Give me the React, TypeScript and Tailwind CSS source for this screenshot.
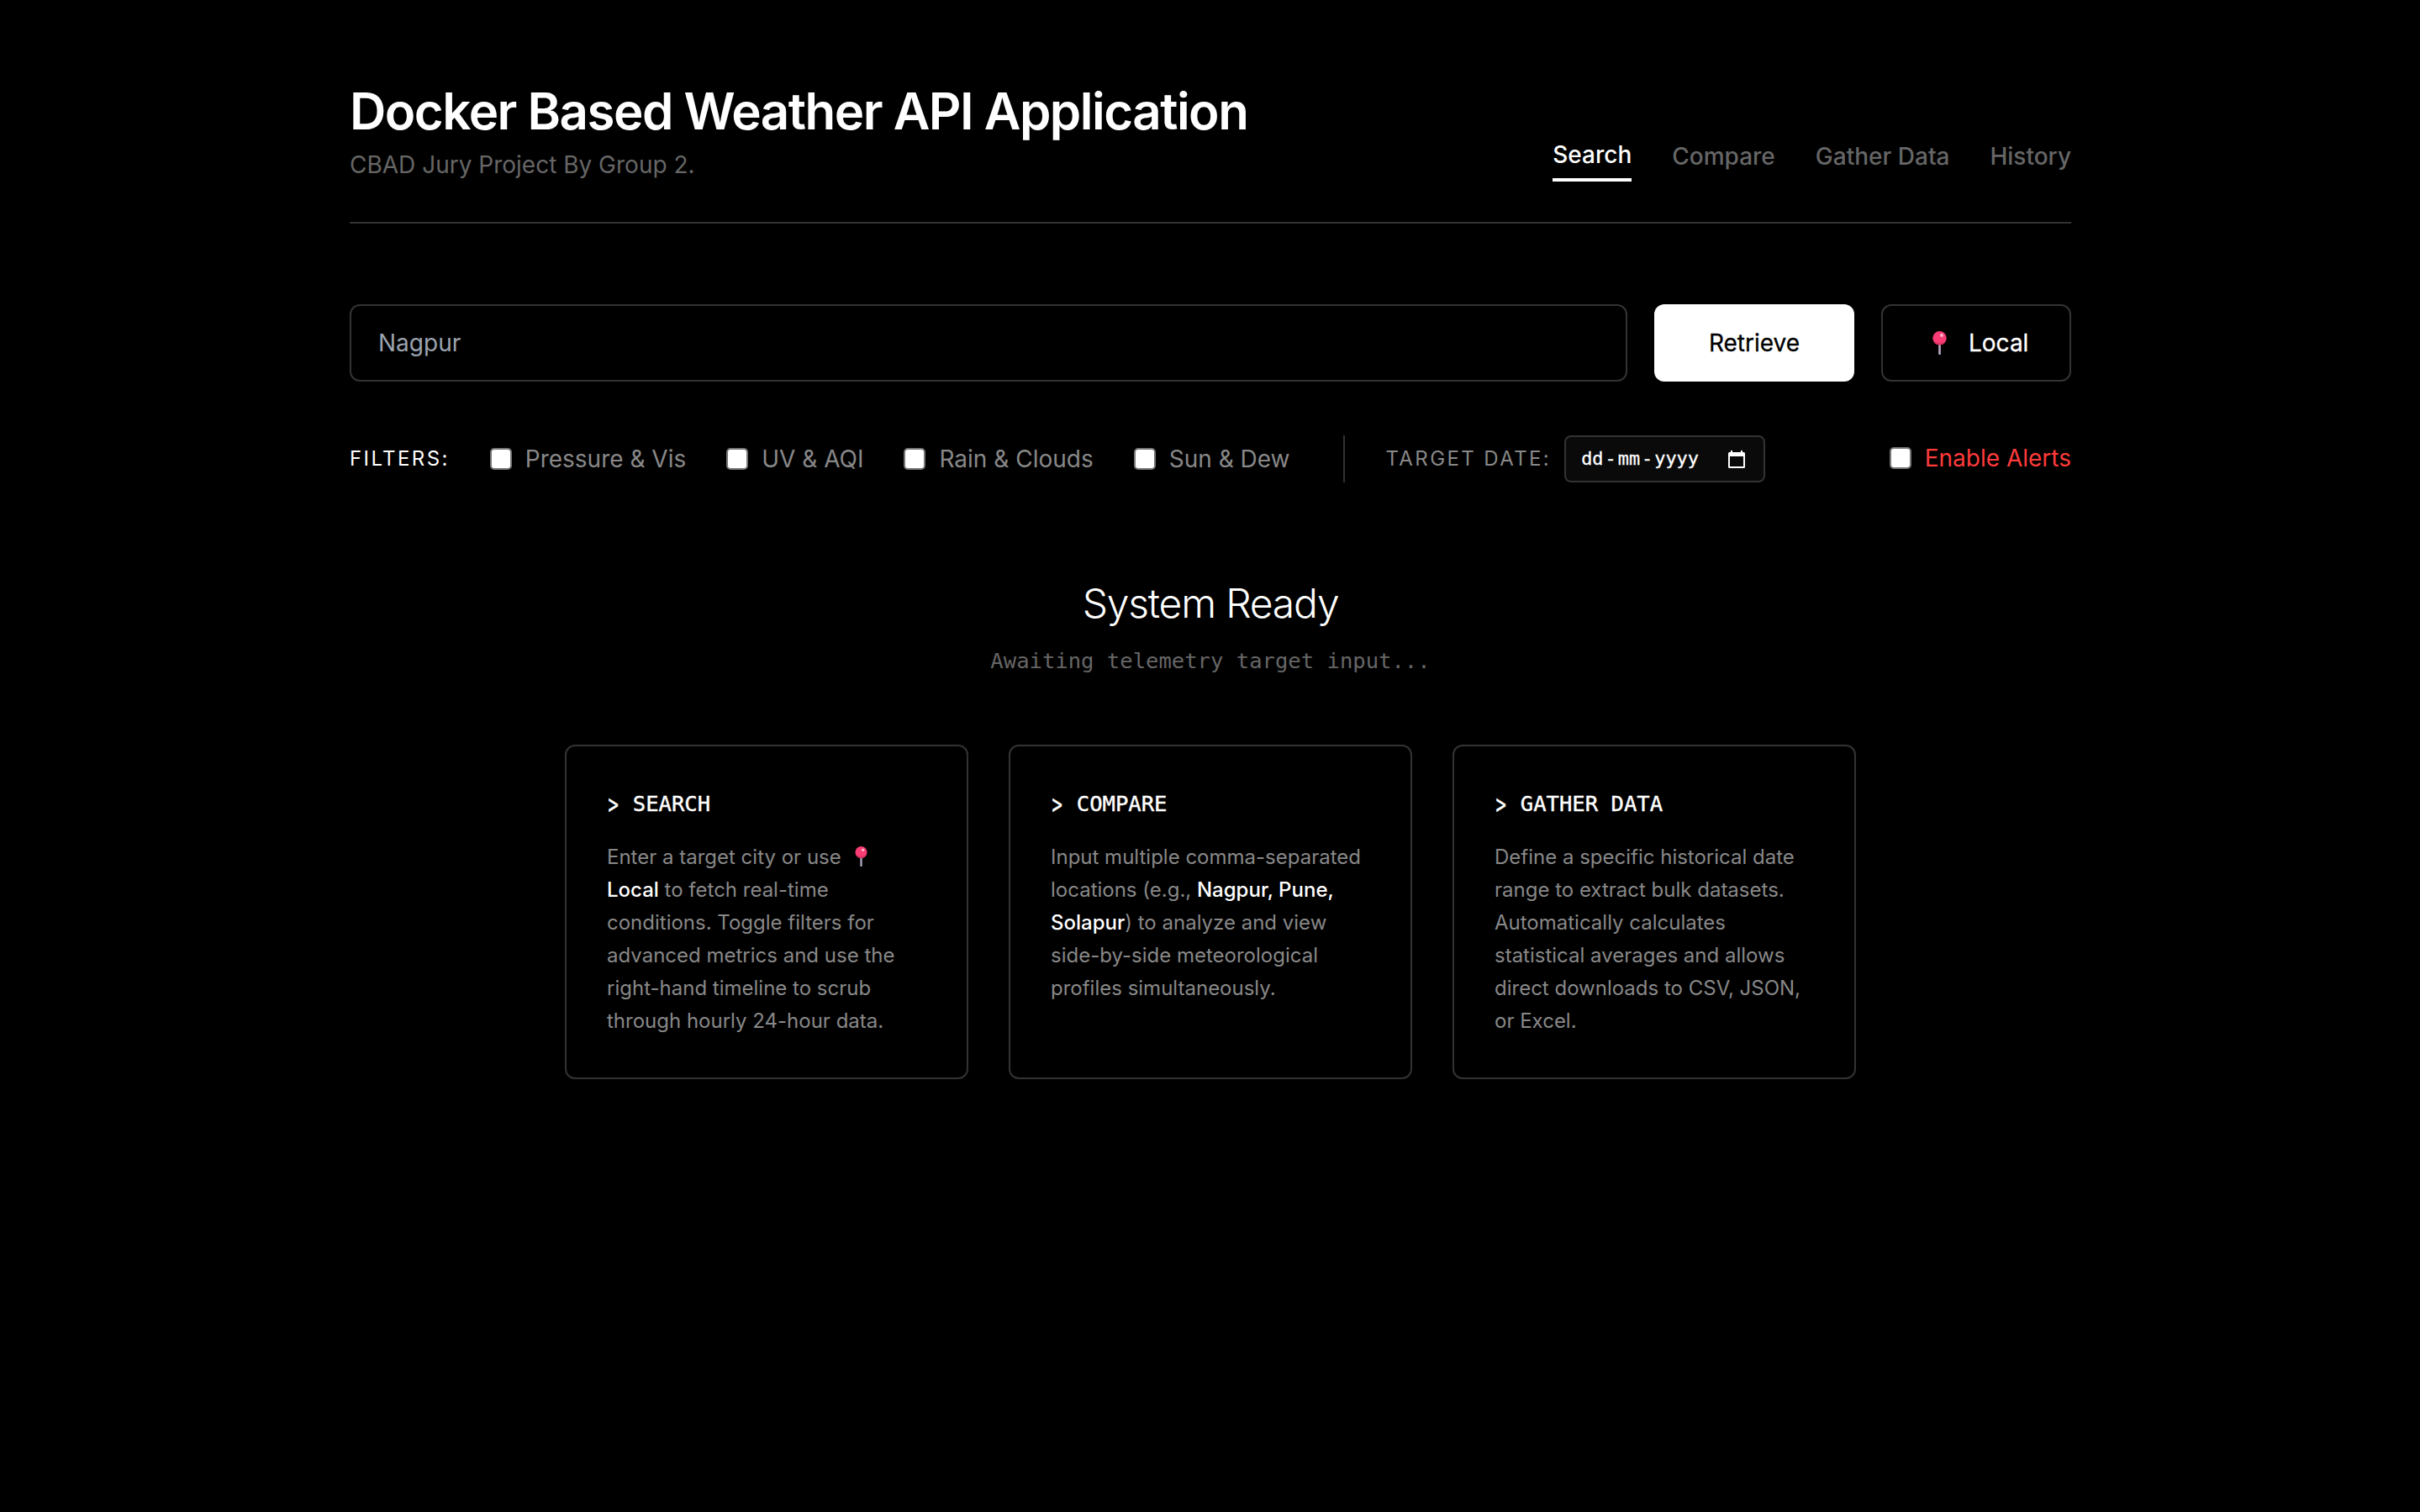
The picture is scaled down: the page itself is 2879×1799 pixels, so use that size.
"use client";

import { useState } from 'react';

const tabs = ['Search', 'Compare', 'Gather Data', 'History'];
const filters = ['Pressure & Vis', 'UV & AQI', 'Rain & Clouds', 'Sun & Dew'];

function PinIcon({ className }: { className?: string }) {
  return (
    <svg viewBox="0 0 17 28" className={className} fill="none">
      <rect x="7" y="15" width="3" height="13" rx="0.8" fill="#8d8299" />
      <rect x="7.8" y="16" width="1.4" height="12" fill="#b3a8c0" />
      <circle cx="8.500" cy="8.200" r="8.200" fill="#f93c73" />
      <path d="M1 11.500a8.200 8.200 0 0 0 15 0c-4 3-11 3-15 0Z" fill="#dc3468" />
      <circle cx="11" cy="5" r="1.9" fill="#ffc0d4" />
    </svg>
  );
}

function CalendarIcon() {
  return (
    <svg viewBox="0 0 20 21" className="h-[21px] w-5" fill="#fff">
      <path
        fillRule="evenodd"
        d="M3 0h2v2h10V0h2v2h1.500a1.500 1.500 0 0 1 1.500 1.500v16a1.500 1.500 0 0 1-1.500 1.500h-17A1.500 1.500 0 0 1 0 19.500v-16A1.500 1.500 0 0 1 1.500 2H3V0ZM2 7v12h16V7H2Z"
      />
    </svg>
  );
}

function Checkbox() {
  return (
    <input
      type="checkbox"
      className="size-[26px] shrink-0 appearance-none rounded-[5px] border-2 border-[#767676] bg-white"
    />
  );
}

function Card({ title, children }: { title: string; children: React.ReactNode }) {
  return (
    <div className="rounded-xl border-2 border-[#333] p-12">
      <h3 className="mb-6 font-['DejaVu_Sans_Mono',monospace] text-[25.57px] leading-10 font-medium text-white [-webkit-text-stroke:0.4px_#fff]">
        <span className="inline-block translate-y-px scale-x-80 scale-y-125">&gt;</span> {title}
      </h3>
      <p className="text-2xl leading-[39px] text-[#888]">{children}</p>
    </div>
  );
}

export default function App() {
  const [active, setActive] = useState('Search');
  const [city, setCity] = useState('');

  return (
    <div className="min-h-screen bg-black pt-24 pl-px font-['Inter',sans-serif] text-white">
      <div className="mx-auto w-[2048px]">
        <header className="flex items-end justify-between border-b-2 border-[#333] pb-12">
          <div>
            <h1 className="text-6xl leading-[72px] font-semibold tracking-tight">
              Docker Based Weather API Application
            </h1>
            <p className="mt-2 text-[28px] leading-10 text-[#666]">CBAD Jury Project By Group 2.</p>
          </div>
          <nav className="flex gap-12 text-[28px] leading-10 font-medium">
            {tabs.map((tab) => (
              <button
                key={tab}
                onClick={() => setActive(tab)}
                className={
                  tab === active
                    ? 'border-b-4 border-white pb-2 text-white'
                    : 'pb-2 text-[#666]'
                }
              >
                {tab}
              </button>
            ))}
          </nav>
        </header>

        <main className="pt-24">
          <div className="flex gap-8 text-[28px] leading-10">
            <input
              type="text"
              value={city}
              onChange={(e) => setCity(e.target.value)}
              placeholder="Nagpur"
              className="h-[92px] min-w-0 flex-1 rounded-xl border-2 border-[#333] bg-black px-8 placeholder:text-[#9ca3af]"
            />
            <button className="w-[238px] rounded-xl bg-white text-black [-webkit-text-stroke:0.3px_#000]">
              Retrieve
            </button>
            <button className="flex w-[226px] items-center rounded-xl border-2 border-[#333] pl-[59px] [-webkit-text-stroke:0.3px_#fff]">
              <PinIcon className="mr-[26px] h-7 w-[17px]" />
              Local
            </button>
          </div>

          <div className="mt-16 flex h-14 items-center gap-12 text-[28px] leading-10 text-[#888]">
            <span className="text-2xl tracking-widest text-white">FILTERS:</span>
            {filters.map((name) => (
              <label key={name} className="flex items-center gap-4">
                <Checkbox />
                {name}
              </label>
            ))}
            <div className="ml-4 flex h-14 items-center gap-4 border-l-2 border-[#333] pl-12">
              <span className="text-2xl tracking-widest">TARGET DATE:</span>
              <div className="flex h-14 w-[239px] items-center justify-between rounded-lg border-2 border-[#333] bg-[#0a0a0a] pr-[22px] pl-4 font-['DejaVu_Sans_Mono',monospace] text-[21.9px] text-white [-webkit-text-stroke:0.3px_#fff]">
                <div className="flex">
                  <span className="px-0.5">dd</span>-<span className="px-0.5">mm</span>-
                  <span className="px-0.5">yyyy</span>
                </div>
                <CalendarIcon />
              </div>
            </div>
            <label className="mb-0.5 ml-auto flex items-center gap-4 text-[#ff3b3b]">
              <Checkbox />
              Enable Alerts
            </label>
          </div>

          <section className="pt-28">
            <div className="text-center">
              <h2 className="text-5xl leading-16 font-light tracking-tight">System Ready</h2>
              <p className="mt-4 font-['DejaVu_Sans_Mono',monospace] text-[25.57px] leading-10 text-[#666]">
                Awaiting telemetry target input...
              </p>
            </div>
            <div className="mx-auto mt-20 grid w-[1536px] grid-cols-3 gap-12">
              <Card title="SEARCH">
                Enter a target city or use{' '}
                <PinIcon className="mr-2 ml-2.5 inline h-6 w-[15px] align-[-3px]" />{' '}
                <span className="font-medium text-white">Local</span> to fetch real-time conditions.
                Toggle filters for advanced metrics and use the right-hand timeline to scrub through
                hourly 24-hour data.
              </Card>
              <Card title="COMPARE">
                Input multiple comma-separated locations (e.g.,{' '}
                <span className="font-medium text-white">Nagpur, Pune, Solapur</span>) to analyze and
                view side-by-side meteorological profiles simultaneously.
              </Card>
              <Card title="GATHER DATA">
                Define a specific historical date range to extract bulk datasets. Automatically
                calculates statistical averages and allows direct downloads to CSV, JSON, or Excel.
              </Card>
            </div>
          </section>
        </main>
      </div>
    </div>
  );
}
